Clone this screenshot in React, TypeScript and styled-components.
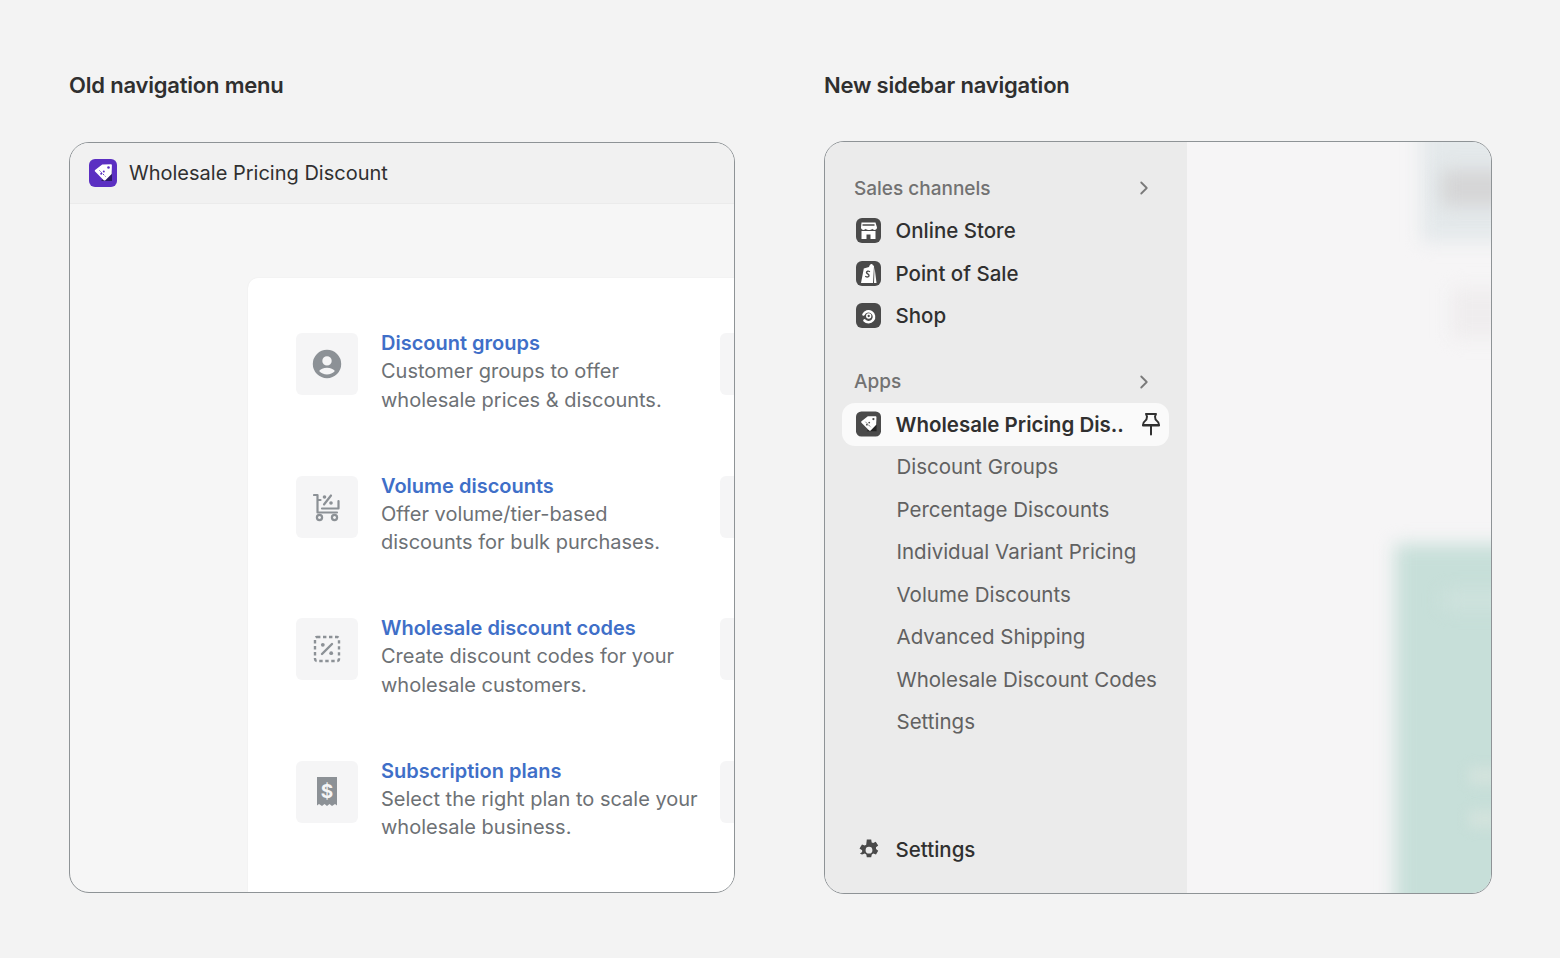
import React from 'react';
import styled, { createGlobalStyle } from 'styled-components';
import { ChevronRight } from 'lucide-react';

const GlobalStyle = createGlobalStyle`
    html, body {
        margin: 0;
        padding: 0;
        background: #f3f3f3;
        font-family: 'Inter', 'Liberation Sans', sans-serif;
    }
    * {
        box-sizing: border-box;
    }
`;

const Page = styled.div`
    width: 1560px;
    height: 958px;
    padding: 71px 68px 0 69px;
    display: grid;
    grid-template-columns: 666px 668px;
    column-gap: 89px;
    background: #f3f3f3;
    overflow: hidden;
`;

const Column = styled.section`
    display: flex;
    flex-direction: column;
`;

const Heading = styled.h2`
    margin: 0;
    height: 28px;
    font-size: 22px;
    line-height: 28px;
    font-weight: 600;
    letter-spacing: -0.2px;
    color: #2f2f2f;
`;

const Frame = styled.div<{ $top: number; $height: number }>`
    position: relative;
    margin-top: ${(p) => p.$top}px;
    height: ${(p) => p.$height}px;
    border: 1px solid #8e9396;
    border-radius: 20px;
    overflow: hidden;
`;

const OldFrame = styled(Frame)`
    display: flex;
    flex-direction: column;
    background: #f6f6f6;
`;

const TitleBar = styled.header`
    flex: none;
    height: 61px;
    padding-left: 19px;
    display: flex;
    align-items: center;
    gap: 12px;
    background: #f1f1f1;
    border-bottom: 1px solid #ebebeb;
    font-size: 20px;
    color: #303030;
`;

const Card = styled.div`
    flex: 1;
    margin: 74px 0 0 178px;
    padding: 55px 0 0 48px;
    background: #ffffff;
    border-top-left-radius: 10px;
    box-shadow: 0 0 2px rgba(0, 0, 0, 0.06);
    display: flex;
    flex-direction: column;
    gap: 80.5px;
`;

const MenuRow = styled.div`
    display: flex;
    height: 62px;
`;

const Tile = styled.div`
    flex: none;
    width: 62px;
    height: 62px;
    border-radius: 6px;
    background: #f5f5f6;
    display: flex;
    align-items: center;
    justify-content: center;
`;

const EdgeTile = styled(Tile)`
    margin-left: auto;
    width: 14px;
    border-radius: 6px 0 0 6px;
`;

const MenuText = styled.div`
    width: 326px;
    margin-left: 23px;
    margin-top: -4px;
`;

const MenuTitle = styled.div`
    font-size: 20px;
    line-height: 28px;
    font-weight: 600;
    color: #3f6fc8;
`;

const MenuDesc = styled.div`
    font-size: 20px;
    line-height: 28.5px;
    color: #6d7175;
    white-space: nowrap;
`;

const NewFrame = styled(Frame)`
    display: flex;
    background: #f6f5f6;
`;

const Sidebar = styled.nav`
    flex: none;
    width: 362px;
    padding: 25px 18px 22px 17px;
    background: #ebebeb;
    display: flex;
    flex-direction: column;
`;

const NavGroup = styled.div`
    display: flex;
    flex-direction: column;
    margin-bottom: 23.5px;
`;

const NavHeader = styled.div`
    height: 42.5px;
    padding: 0 14px 0 12px;
    display: flex;
    align-items: center;
    justify-content: space-between;
    font-size: 19px;
    font-weight: 500;
    color: #727272;
`;

const NavRow = styled.div<{ $active?: boolean }>`
    height: 42.5px;
    padding: 0 8px 0 14px;
    display: flex;
    align-items: center;
    gap: 14.5px;
    font-size: 20.5px;
    font-weight: ${(p) => (p.$active ? 600 : 500)};
    color: #303030;
    border-radius: 13px;
    background: ${(p) => (p.$active ? '#fafafa' : 'transparent')};
`;

const PinSlot = styled.span`
    margin-left: auto;
    display: flex;
`;

const SubRow = styled.div`
    height: 42.5px;
    padding-left: 54.5px;
    display: flex;
    align-items: center;
    font-size: 20.5px;
    color: #616161;
`;

const FooterRow = styled(NavRow)`
    margin-top: auto;
`;

const Blur = styled.div`
    position: absolute;
    filter: blur(9px);
`;

const BlurTop = styled(Blur)`
    top: -20px;
    right: -20px;
    width: 90px;
    height: 120px;
    background: #e4e9eb;
`;

const BlurBand = styled(Blur)`
    top: 28px;
    right: -20px;
    width: 70px;
    height: 36px;
    background: #d5d5d6;
`;

const BlurSoft = styled(Blur)`
    top: 146px;
    right: -20px;
    width: 60px;
    height: 50px;
    background: #efedee;
`;

const BlurGreen = styled(Blur)`
    top: 402px;
    right: -30px;
    width: 126px;
    height: 380px;
    background: #c7dfd9;
`;

const BlurStrip = styled(Blur)`
    top: 450px;
    right: -20px;
    width: 68px;
    height: 16px;
    background: #d0e3de;
`;

const BlurSpot = styled(Blur)<{ $top: number }>`
    top: ${(p) => p.$top}px;
    right: -10px;
    width: 32px;
    height: 18px;
    background: #d2e2dc;
    filter: blur(6px);
`;

const CenterSlot = styled.span`
    flex: none;
    width: 25px;
    display: flex;
    justify-content: center;
`;

const TagPath = 'M11.2 5.6h6.6c.9 0 1.6.7 1.6 1.6v6.6c0 .5-.2.9-.5 1.2l-5.6 5.6c-.6.6-1.7.6-2.3 0L5 14.6c-.6-.6-.6-1.7 0-2.3L10 6.1c.3-.3.7-.5 1.2-.5z';

const AppLogo = ({ bg, dark, size }: { bg: string; dark: string; size: number }) => (
    <svg width={size} height={size} viewBox="0 0 28 28">
        <rect width="28" height="28" rx="6" fill={bg} />
        <path d="M23 22H12l11-11z" fill={dark} />
        <path d="M13.6 5.4 22 5.2c.5 0 .9.4.9.9l-.2 8.4c0 .3-.1.5-.3.7l-6 6c-.5.5-1.2.5-1.700 0L6.100 12.600c-.5-.5-.5-1.200 0-1.700l6.800-5.200c.2-.2.4-.3.7-.3z" fill="#fff" />
        <circle cx="19.500" cy="8.500" r="1.300" fill={bg} />
        <path d="m10.500 11.500 6 6" stroke={bg} strokeWidth="1" fill="none" strokeDasharray="1.500 1" />
        <circle cx="12.200" cy="14.800" r="1" fill={bg} />
        <circle cx="14.800" cy="12.400" r="1" fill={bg} />
    </svg>
);

const PersonIcon = () => (
    <svg width="30" height="30" viewBox="0 0 30 30">
        <path fillRule="evenodd" fill="#8c9196" d="M15 .8a14.200 14.200 0 1 0 0 28.400A14.200 14.200 0 0 0 15 .8zm0 6.400a4.700 4.700 0 1 1 0 9.400 4.700 4.700 0 0 1 0-9.400zm0 18.300c-3.100 0-5.900-1.300-7.900-3.400 1.300-2 4.300-3.300 7.900-3.300s6.600 1.300 7.900 3.300c-2 2.100-4.800 3.400-7.900 3.400z" />
    </svg>
);

const CartIcon = () => (
    <svg width="28" height="30" viewBox="0 0 28 30" fill="none" stroke="#8c9196">
        <path d="M1 3h3.500v17.500H24M4.500 8h3M25.500 9v7.500H9" strokeWidth="2.200" strokeLinecap="round" strokeLinejoin="round" />
        <circle cx="6.500" cy="25.500" r="2.600" strokeWidth="2.200" />
        <circle cx="21.500" cy="25.500" r="2.600" strokeWidth="2.200" />
        <path d="m11 12.500 7-9" strokeWidth="2.200" strokeLinecap="round" />
        <circle cx="11.500" cy="5" r="1.800" fill="#8c9196" stroke="none" />
        <circle cx="18" cy="11" r="1.800" fill="#8c9196" stroke="none" />
    </svg>
);

const CodeIcon = () => (
    <svg width="28" height="28" viewBox="0 0 28 28" fill="none" stroke="#8c9196" strokeWidth="2.400">
        <rect x="2" y="2" width="24" height="24" rx="2" strokeDasharray="3.400 2.600" />
        <path d="m9 19 10-10" strokeLinecap="round" />
        <circle cx="9.800" cy="9.800" r="1.900" fill="#8c9196" stroke="none" />
        <circle cx="18.200" cy="18.200" r="1.900" fill="#8c9196" stroke="none" />
    </svg>
);

const ReceiptIcon = () => (
    <svg width="20" height="30" viewBox="0 0 20 30">
        <path fill="#8c9196" d="M0 0h20v28.500l-2-1.500-3 2-2.500-2-2.500 2-2.500-2-2.500 2-3-2-2 1.500z" />
        <text x="10" y="20.500" textAnchor="middle" fontSize="19" fontWeight="700" fill="#f5f5f6" fontFamily="Inter, sans-serif">$</text>
    </svg>
);

const StoreIcon = () => (
    <svg width="25" height="25" viewBox="0 0 25 25">
        <rect width="25" height="25" rx="6" fill="#4a4a4a" />
        <path fill="#fff" d="M5.500 4.500h14l1.500 5c0 1.500-1.100 2.500-2.500 2.500-1 0-1.800-.5-2.200-1.200-.5.700-1.300 1.200-2.300 1.200h-2c-1 0-1.800-.5-2.300-1.200-.4.700-1.200 1.200-2.200 1.200C6.100 12 5 11 5 9.500z" />
        <path fill="#4a4a4a" d="M6.500 6.300h12v1.500h-12z" />
        <path fill="#fff" d="M5.500 13h14v8h-5v-4.500h-4V21h-5z" />
    </svg>
);

const PosIcon = () => (
    <svg width="25" height="25" viewBox="0 0 25 25">
        <rect width="25" height="25" rx="6" fill="#4a4a4a" />
        <path fill="#fff" d="M7.800 7.500 13 6c.5-2 1.500-3 2.500-3 .8 0 1.300.6 1.500 1.500l1 .3L17 22H5z" />
        <path fill="#fff" d="M18.500 6 20.500 22H18z" />
        <path d="M13.500 10.500c-1-.6-3-.5-3 1 0 1.400 2.500 1.400 2.500 3 0 1.700-2 1.700-3.300 1" fill="none" stroke="#4a4a4a" strokeWidth="1.400" strokeLinecap="round" />
    </svg>
);

const ShopIcon = () => (
    <svg width="25" height="25" viewBox="0 0 25 25">
        <rect width="25" height="25" rx="6" fill="#4a4a4a" />
        <path d="M7.500 11.500a5.500 5.500 0 1 1 1 6" fill="none" stroke="#fff" strokeWidth="2.600" strokeLinecap="round" />
        <circle cx="12.700" cy="13" r="1.900" fill="none" stroke="#fff" strokeWidth="1.500" />
    </svg>
);

const PinIcon = () => (
    <svg width="20" height="24" viewBox="0 0 20 24" fill="none" stroke="#303030" strokeWidth="2" strokeLinejoin="round" strokeLinecap="round">
        <path d="M5 2h10l-1 2.500c0 2 .5 3.500 2 4.500 1.500 1 2 2.500 2 4H2c0-1.500.5-3 2-4 1.500-1 2-2.500 2-4.500z" />
        <path d="M2 13.500h16M10 14v8.500" />
    </svg>
);

const GearIcon = () => (
    <svg width="22" height="22" viewBox="0 0 22 22">
        <path fillRule="evenodd" fill="#4a4a4a" d="M8.800.6h4.400l.5 2.800 1.500.7 2.500-1.300 2.500 3.700-2.200 1.800v1.700l2.200 1.800-2.200 3.800-2.700-1-1.500.8-.6 2.900H8.800l-.5-2.900-1.500-.8-2.700 1L1.900 14.800l2.200-1.800v-1.700L1.500 9.500 4 5.500l2.700 1 1.500-.8zM11 7.800a3.400 3.400 0 1 0 0 6.800 3.400 3.400 0 0 0 0-6.800z" />
    </svg>
);

const menuItems = [
    { title: 'Discount groups', lines: ['Customer groups to offer', 'wholesale prices & discounts.'], icon: <PersonIcon /> },
    { title: 'Volume discounts', lines: ['Offer volume/tier-based', 'discounts for bulk purchases.'], icon: <CartIcon /> },
    { title: 'Wholesale discount codes', lines: ['Create discount codes for your', 'wholesale customers.'], icon: <CodeIcon /> },
    { title: 'Subscription plans', lines: ['Select the right plan to scale your', 'wholesale business.'], icon: <ReceiptIcon /> },
];

const channels = [
    { label: 'Online Store', icon: <StoreIcon /> },
    { label: 'Point of Sale', icon: <PosIcon /> },
    { label: 'Shop', icon: <ShopIcon /> },
];

const subItems = [
    'Discount Groups',
    'Percentage Discounts',
    'Individual Variant Pricing',
    'Volume Discounts',
    'Advanced Shipping',
    'Wholesale Discount Codes',
    'Settings',
];

const App = () => {
    return (
        <Page>
            <GlobalStyle />
            <Column>
                <Heading>Old navigation menu</Heading>
                <OldFrame $top={43} $height={751}>
                    <TitleBar>
                        <AppLogo bg="#5b2fc2" dark="#2c1a66" size={28} />
                        Wholesale Pricing Discount
                    </TitleBar>
                    <Card>
                        {menuItems.map((item) => (
                            <MenuRow key={item.title}>
                                <Tile>{item.icon}</Tile>
                                <MenuText>
                                    <MenuTitle>{item.title}</MenuTitle>
                                    {item.lines.map((line) => (
                                        <MenuDesc key={line}>{line}</MenuDesc>
                                    ))}
                                </MenuText>
                                <EdgeTile />
                            </MenuRow>
                        ))}
                    </Card>
                </OldFrame>
            </Column>
            <Column>
                <Heading>New sidebar navigation</Heading>
                <NewFrame $top={42} $height={753}>
                    <Sidebar>
                        <NavGroup>
                            <NavHeader>
                                Sales channels
                                <ChevronRight size={22} color="#7a7a7a" />
                            </NavHeader>
                            {channels.map((c) => (
                                <NavRow key={c.label}>
                                    <CenterSlot>{c.icon}</CenterSlot>
                                    {c.label}
                                </NavRow>
                            ))}
                        </NavGroup>
                        <NavHeader>
                            Apps
                            <ChevronRight size={22} color="#7a7a7a" />
                        </NavHeader>
                        <NavRow $active>
                            <CenterSlot>
                                <AppLogo bg="#4a4a4a" dark="#222222" size={30} />
                            </CenterSlot>
                            Wholesale Pricing Dis..
                            <PinSlot>
                                <PinIcon />
                            </PinSlot>
                        </NavRow>
                        {subItems.map((s) => (
                            <SubRow key={s}>{s}</SubRow>
                        ))}
                        <FooterRow>
                            <CenterSlot>
                                <GearIcon />
                            </CenterSlot>
                            Settings
                        </FooterRow>
                    </Sidebar>
                    <BlurTop />
                    <BlurBand />
                    <BlurSoft />
                    <BlurGreen />
                    <BlurStrip />
                    <BlurSpot $top={625} />
                    <BlurSpot $top={668} />
                </NewFrame>
            </Column>
        </Page>
    );
};

export default App;
